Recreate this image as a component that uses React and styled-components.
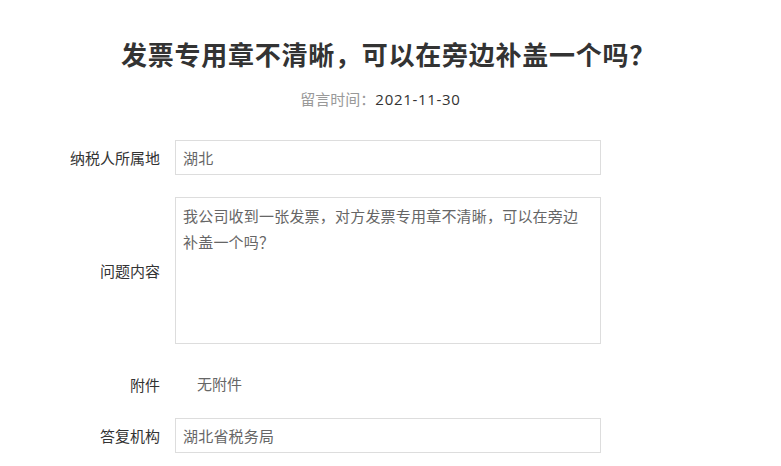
import React from 'react';
import styled, { createGlobalStyle } from 'styled-components';

const GlobalStyle = createGlobalStyle`
  body {
    margin: 0;
    background: #fff;
    font-family: "Noto Sans CJK SC", "Noto Sans", sans-serif;
  }
`;

const Page = styled.div`
  width: 781px;
  height: 466px;
  overflow: hidden;
  background: #fff;
`;

const Title = styled.h1`
  margin: 0;
  padding: 36px 4px 0 0;
  font-size: 26px;
  letter-spacing: 0.75px;
  line-height: 36px;
  font-weight: 700;
  color: #333;
  text-align: center;
`;

const Meta = styled.div`
  margin-top: 16px;
  padding-right: 20px;
  font-size: 15px;
  line-height: 22px;
  color: #999;
  text-align: center;
`;

const Date = styled.span`
  font-family: "Open Sans", "Noto Sans CJK SC", sans-serif;
  font-size: 15px;
  letter-spacing: 0.7px;
  color: #333;
`;

const Form = styled.div`
  margin-top: 30px;
  display: flex;
  flex-direction: column;
`;

const Row = styled.div`
  display: flex;
  align-items: center;
  margin-bottom: ${({ gap }) => gap}px;
`;

const Label = styled.div`
  width: 160px;
  margin-right: 15px;
  text-align: right;
  font-size: 15px;
  color: #333;
`;

const Field = styled.div`
  box-sizing: border-box;
  width: 426px;
  height: ${({ tall }) => (tall ? 147 : 35)}px;
  border: 1px solid #ddd;
  padding: ${({ tall }) => (tall ? '5px 7px' : '0 7px')};
  font-size: 15px;
  letter-spacing: 0.2px;
  line-height: ${({ tall }) => (tall ? '26px' : '33px')};
  color: #666;
`;

const Plain = styled.div`
  padding-left: 22px;
  height: 34px;
  line-height: 34px;
  font-size: 15px;
  color: #666;
`;

export default function App() {
  return (
    <Page>
      <GlobalStyle />
      <Title>发票专用章不清晰，可以在旁边补盖一个吗？</Title>
      <Meta>
        留言时间：<Date>2021-11-30</Date>
      </Meta>
      <Form>
        <Row gap={22}>
          <Label>纳税人所属地</Label>
          <Field>湖北</Field>
        </Row>
        <Row gap={23}>
          <Label>问题内容</Label>
          <Field tall>我公司收到一张发票，对方发票专用章不清晰，可以在旁边补盖一个吗？</Field>
        </Row>
        <Row gap={17}>
          <Label>附件</Label>
          <Plain>无附件</Plain>
        </Row>
        <Row gap={0}>
          <Label>答复机构</Label>
          <Field>湖北省税务局</Field>
        </Row>
      </Form>
    </Page>
  );
}
